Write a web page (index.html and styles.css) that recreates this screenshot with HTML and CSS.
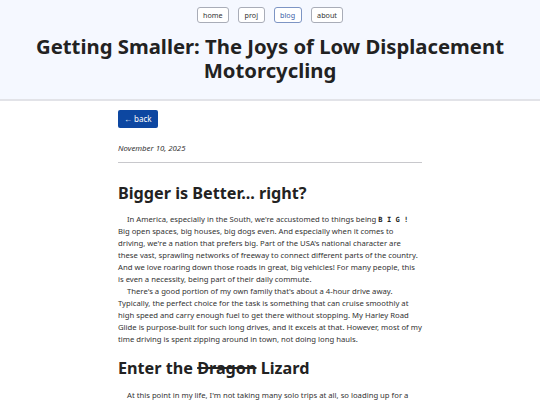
FILE: index.html
```html
<!DOCTYPE html>
<html lang="en">
<head>
<meta charset="utf-8">
<title>Getting Smaller: The Joys of Low Displacement Motorcycling</title>
<link rel="stylesheet" href="styles.css">
</head>
<body>
<header class="site-header">
  <nav class="nav">
    <a class="nav-btn" href="#">home</a>
    <a class="nav-btn" href="#">proj</a>
    <a class="nav-btn active" href="#">blog</a>
    <a class="nav-btn" href="#">about</a>
  </nav>
  <h1 class="title">Getting Smaller: The Joys of Low Displacement Motorcycling</h1>
</header>
<main class="content">
  <a class="back-btn" href="#">&larr; back</a>
  <p class="date">November 10, 2025</p>
  <hr class="rule">
  <h2 class="section-title first">Bigger is Better... right?</h2>
  <p class="para">In America, especially in the South, we're accustomed to things being <code class="big">B I G !</code><br>Big open spaces, big houses, big dogs even. And especially when it comes to driving, we're a nation that prefers big. Part of the USA's national character are these vast, sprawling networks of freeway to connect different parts of the country. And we love roaring down those roads in great, big vehicles! For many people, this is even a necessity, being part of their daily commute.</p>
  <p class="para">There's a good portion of my own family that's about a 4-hour drive away. Typically, the perfect choice for the task is something that can cruise smoothly at high speed and carry enough fuel to get there without stopping. My Harley Road Glide is purpose-built for such long drives, and it excels at that. However, most of my time driving is spent zipping around in town, not doing long hauls.</p>
  <h2 class="section-title">Enter the <s>Dragon</s> Lizard</h2>
  <p class="para">At this point in my life, I'm not taking many solo trips at all, so loading up for a</p>
</main>
</body>
</html>
```
FILE: styles.css
```css
html, body {
  margin: 0;
  padding: 0;
  background: #ffffff;
  font-family: "Noto Sans", "Open Sans", sans-serif;
  color: #2b2b2b;
}
.site-header {
  background: #f5f8ff;
  border-bottom: 2px solid #e2e3e8;
  padding: 7px 0 17px;
  text-align: center;
}
.nav {
  display: flex;
  justify-content: center;
  gap: 9px;
}
.nav-btn {
  display: inline-block;
  font-size: 7.2px;
  line-height: 14px;
  padding: 0 5.5px;
  border: 1px solid #a9adb8;
  border-radius: 3px;
  color: #333;
  text-decoration: none;
  background: #fff;
}
.nav-btn.active {
  color: #3a5fa8;
  border-color: #7d95c4;
}
.title {
  margin: 12px 0 0;
  padding: 0 20px;
  font-size: 20.3px;
  line-height: 23.5px;
  font-weight: 700;
  color: #222;
}
.content {
  width: 304px;
  margin: 0 auto;
  padding-top: 9px;
}
.back-btn {
  display: block;
  width: fit-content;
  background: #0d47a1;
  color: #fff;
  font-size: 8px;
  line-height: 18px;
  padding: 0 6px;
  border-radius: 2px;
  text-decoration: none;
}
.date {
  margin: 14px 0 0;
  font-size: 7.8px;
  font-style: italic;
  line-height: 12px;
  color: #333;
}
.rule {
  border: 0;
  border-top: 1px solid #c8c8cc;
  margin: 8px 0 0;
}
.section-title {
  font-size: 16.2px;
  line-height: 20px;
  margin: 13px 0 11px;
  font-weight: 700;
  color: #222;
}
.section-title.first {
  margin-top: 20px;
  margin-bottom: 10px;
}
.para {
  font-size: 7.7px;
  line-height: 12px;
  margin: 0;
  text-indent: 9px;
  color: #333;
}
.big {
  font-family: "DejaVu Sans Mono", monospace;
  font-weight: 700;
  font-size: 7.1px;
  line-height: 1;
  color: #222;
}
s {
  text-decoration-thickness: 1.5px;
}
```
